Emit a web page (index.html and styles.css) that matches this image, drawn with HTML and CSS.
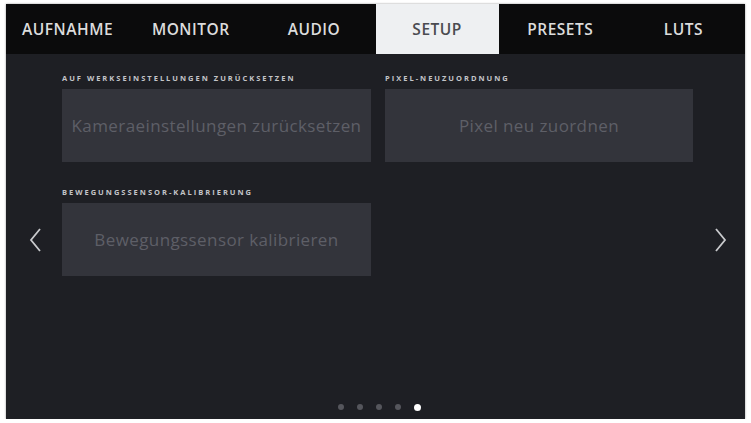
FILE: index.html
```html
<!DOCTYPE html>
<html lang="de">
<head>
  <meta charset="UTF-8">
  <meta name="viewport" content="width=device-width, initial-scale=1.0">
  <link rel="stylesheet" href="styles.css">
  <title>Setup</title>
</head>
<body>
  <div class="screen">
    <div class="tabs">
      <div class="tab">AUFNAHME</div>
      <div class="tab">MONITOR</div>
      <div class="tab">AUDIO</div>
      <div class="tab active">SETUP</div>
      <div class="tab">PRESETS</div>
      <div class="tab">LUTS</div>
    </div>
    <div class="page">
      <div class="nav nav-left">
        <svg width="14" height="26" viewBox="0 0 14 26"><path d="M12 2 L3 13 L12 24" fill="none" stroke="#c9cacd" stroke-width="1.8"/></svg>
      </div>
      <div class="settings">
        <div class="item">
          <p class="label">AUF WERKSEINSTELLUNGEN ZURÜCKSETZEN</p>
          <div class="card">Kameraeinstellungen zurücksetzen</div>
        </div>
        <div class="item">
          <p class="label">PIXEL-NEUZUORDNUNG</p>
          <div class="card">Pixel neu zuordnen</div>
        </div>
        <div class="item">
          <p class="label">BEWEGUNGSSENSOR-KALIBRIERUNG</p>
          <div class="card">Bewegungssensor kalibrieren</div>
        </div>
      </div>
      <div class="nav nav-right">
        <svg width="14" height="26" viewBox="0 0 14 26"><path d="M2 2 L11 13 L2 24" fill="none" stroke="#c9cacd" stroke-width="1.8"/></svg>
      </div>
      <div class="dots">
        <span class="dot"></span>
        <span class="dot"></span>
        <span class="dot"></span>
        <span class="dot"></span>
        <span class="dot current"></span>
      </div>
    </div>
  </div>
</body>
</html>
```

FILE: styles.css
```css
body {
  margin: 0;
  background-color: #ffffff;
  font-family: "Open Sans", sans-serif;
}

.screen {
  margin: 4px 0 0 6px;
  width: 739px;
  height: 415px;
  background-color: #1e1f24;
  display: flex;
  flex-direction: column;
  box-shadow: 0 0 2px rgba(0, 0, 0, 0.4);
}

.tabs {
  display: flex;
  height: 50px;
  background-color: #0b0b0c;
}

.tab {
  flex: 1;
  display: flex;
  align-items: center;
  justify-content: center;
  color: #dcdcdc;
  font-size: 15.5px;
  font-weight: 600;
  letter-spacing: 0.5px;
}

.tab.active {
  background-color: #eef0f2;
  color: #4a4b50;
}

.page {
  flex: 1;
  display: grid;
  grid-template-columns: 56px 1fr 52px;
  grid-template-rows: 1fr 15px;
}

.nav {
  display: flex;
  align-items: center;
  padding-top: 22px;
}

.nav-left {
  justify-content: flex-start;
  padding-left: 22px;
}

.nav-right {
  justify-content: flex-start;
  padding-left: 21px;
}

.settings {
  display: grid;
  grid-template-columns: 309px 308px;
  column-gap: 14px;
  row-gap: 24px;
  align-content: start;
  padding-top: 18px;
}

.label {
  margin: 0 0 5px 0;
  font-size: 7.5px;
  font-weight: bold;
  line-height: 12px;
  letter-spacing: 2px;
  color: #c4c5c9;
}

.card {
  height: 73px;
  background-color: #33343b;
  display: flex;
  align-items: center;
  justify-content: center;
  color: #5e5f67;
  font-size: 17px;
  letter-spacing: 0.4px;
}

.dots {
  grid-column: 1 / 4;
  display: flex;
  justify-content: center;
  align-items: flex-start;
  gap: 13px;
  padding-left: 8px;
}

.dot {
  width: 6px;
  height: 6px;
  border-radius: 50%;
  background-color: #55565c;
}

.dot.current {
  width: 7px;
  height: 7px;
  background-color: #ffffff;
}
```
